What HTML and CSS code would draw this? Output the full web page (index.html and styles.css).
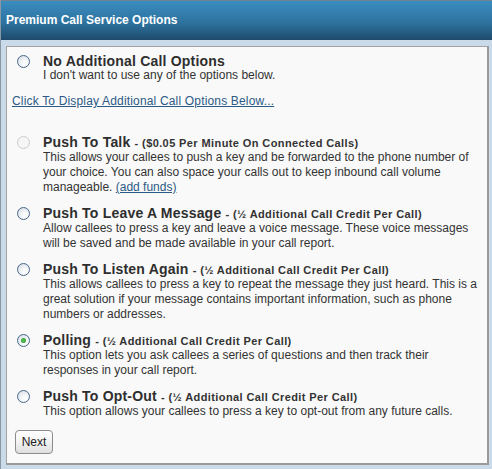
FILE: index.html
```html
<!DOCTYPE html>
<html>
<head>
<meta charset="utf-8">
<link rel="stylesheet" href="styles.css">
</head>
<body>
<div class="frame">
  <div class="header">Premium Call Service Options</div>
  <div class="panel">
    <div class="option first">
      <input type="radio" class="radio" name="opt">
      <div class="body">
        <div class="title">No Additional Call Options</div>
        <div class="desc">I don't want to use any of the options below.</div>
      </div>
    </div>
    <a class="toggle" href="#">Click To Display Additional Call Options Below...</a>
    <div class="option talk">
      <input type="radio" class="radio" disabled>
      <div class="body">
        <div class="title">Push To Talk <span class="note">- ($0.05 Per Minute On Connected Calls)</span></div>
        <div class="desc">This allows your callees to push a key and be forwarded to the phone number of your choice. You can also space your calls out to keep inbound call volume manageable. <a href="#" class="funds">(add funds)</a></div>
      </div>
    </div>
    <div class="option">
      <input type="radio" class="radio">
      <div class="body">
        <div class="title">Push To Leave A Message <span class="note">- (½ Additional Call Credit Per Call)</span></div>
        <div class="desc">Allow callees to press a key and leave a voice message. These voice messages will be saved and be made available in your call report.</div>
      </div>
    </div>
    <div class="option">
      <input type="radio" class="radio">
      <div class="body">
        <div class="title">Push To Listen Again <span class="note">- (½ Additional Call Credit Per Call)</span></div>
        <div class="desc">This allows callees to press a key to repeat the message they just heard. This is a great solution if your message contains important information, such as phone numbers or addresses.</div>
      </div>
    </div>
    <div class="option">
      <input type="radio" class="radio" checked>
      <div class="body">
        <div class="title">Polling <span class="note">- (½ Additional Call Credit Per Call)</span></div>
        <div class="desc">This option lets you ask callees a series of questions and then track their responses in your call report.</div>
      </div>
    </div>
    <div class="option">
      <input type="radio" class="radio">
      <div class="body">
        <div class="title">Push To Opt-Out <span class="note">- (½ Additional Call Credit Per Call)</span></div>
        <div class="desc">This option allows your callees to press a key to opt-out from any future calls.</div>
      </div>
    </div>
    <button class="next" type="button">Next</button>
  </div>
</div>
</body>
</html>
```
FILE: styles.css
```css
html, body {
  margin: 0;
  padding: 0;
}
body {
  font-family: "Liberation Sans", Arial, sans-serif;
  color: #333;
}
.frame {
  width: 492px;
  height: 469px;
  box-sizing: border-box;
  background: #cbdae8;
  border-left: 1px solid #8a98a6;
  overflow: hidden;
}
.header {
  height: 40px;
  box-sizing: border-box;
  border-top: 1px solid #6f8395;
  background: linear-gradient(#3a8cbf, #2e73a0 55%, #1e4a6b);
  color: #fff;
  font-weight: bold;
  font-size: 12px;
  line-height: 39px;
  padding-left: 5px;
}
.panel {
  margin: 6px 3px 0 5px;
  height: 419px;
  box-sizing: border-box;
  background: #f9f9f9;
  border: 1px solid #a3a3a3;
  border-right: 2px solid #9a9a9a;
  border-bottom: 2px solid #9a9a9a;
  padding: 7px 5px 0 5px;
}
.option {
  display: flex;
  gap: 13px;
  margin: 0 0 11px 5px;
}
.radio {
  appearance: none;
  -webkit-appearance: none;
  flex: none;
  width: 13px;
  height: 13px;
  margin: 1px 0 0 0;
  border-radius: 50%;
  box-sizing: border-box;
  border: 1px solid #48678a;
  background: radial-gradient(circle at 65% 70%, #ffffff 0%, #f4f6f8 35%, #d0d9e3 100%);
  position: relative;
}
.radio:checked::after {
  content: "";
  position: absolute;
  left: 3px;
  top: 3px;
  width: 5px;
  height: 5px;
  border-radius: 50%;
  background: radial-gradient(circle, #5fd05f 0%, #2f9a2f 70%, #8fce8f 100%);
}
.radio:disabled {
  border-color: #cbcbcb;
  background: #f6f6f6;
}
.body {
  flex: 1;
  min-width: 0;
}
.title {
  font-size: 14px;
  font-weight: bold;
  line-height: 14px;
  color: #2e2e2e;
  letter-spacing: 0.2px;
}
.note {
  font-size: 11px;
  letter-spacing: 0.4px;
  color: #333;
}
.desc {
  font-size: 12px;
  line-height: 15px;
  color: #333;
}
.toggle {
  display: block;
  font-size: 12px;
  line-height: 15px;
  letter-spacing: 0.17px;
  color: #2b5a86;
  text-decoration: underline;
  margin: 0 0 26px 0;
}
.funds {
  color: #2b5a86;
  text-decoration: underline;
}
.next {
  display: block;
  margin: 2px 0 0 3px;
  width: 38px;
  height: 24px;
  padding: 0;
  font-family: "Liberation Sans", Arial, sans-serif;
  font-size: 12px;
  color: #222;
  border: 1px solid #8c8c8c;
  border-radius: 4px;
  background: linear-gradient(#ffffff, #f2f2f2 50%, #dedede);
}
```
